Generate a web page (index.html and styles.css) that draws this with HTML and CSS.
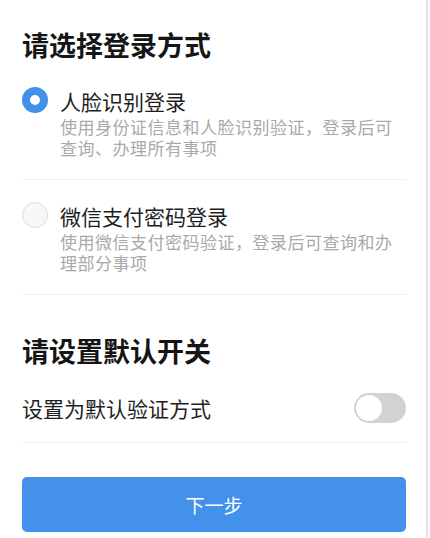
FILE: index.html
```html
<!DOCTYPE html>
<html lang="zh-CN">

<head>
    <meta charset="UTF-8">
    <meta name="viewport" content="width=device-width, initial-scale=1.0">
    <title>登录方式</title>
    <link rel="stylesheet" href="styles.css">
</head>

<body>
    <div class="page">
        <h2 class="title">请选择登录方式</h2>

        <div class="option">
            <span class="radio checked"></span>
            <div class="option-text">
                <p class="option-name">人脸识别登录</p>
                <p class="option-desc">使用身份证信息和人脸识别验证，登录后可查询、办理所有事项</p>
            </div>
        </div>

        <div class="option">
            <span class="radio"></span>
            <div class="option-text">
                <p class="option-name">微信支付密码登录</p>
                <p class="option-desc">使用微信支付密码验证，登录后可查询和办理部分事项</p>
            </div>
        </div>

        <h2 class="title title-second">请设置默认开关</h2>

        <div class="switch-row">
            <span class="switch-label">设置为默认验证方式</span>
            <span class="switch"><span class="knob"></span></span>
        </div>

        <button class="next-btn">下一步</button>
    </div>
</body>

</html>
```

FILE: styles.css
```css
* {
    box-sizing: border-box;
}

body {
    margin: 0;
    background: #fff;
    font-family: "Noto Sans CJK SC", "Noto Sans", sans-serif;
    overflow: hidden;
}

.page {
    width: 428px;
    min-height: 538px;
    padding: 27px 20px 0 22px;
    border-right: 2px solid #e4e4e4;
}

.title {
    margin: 0;
    font-size: 27px;
    line-height: 36px;
    font-weight: 700;
    color: #151515;
}

.title-second {
    margin-top: 38px;
}

.option {
    display: flex;
    align-items: flex-start;
    gap: 12px;
    padding: 24px 0 21px;
    border-bottom: 1px solid #f0f0f0;
}

.option + .option {
    padding-top: 22px;
}

.radio {
    flex: none;
    width: 26px;
    height: 26px;
    margin-top: 0;
    border-radius: 50%;
    border: 1px solid #dcdcdc;
    background: #f7f7f7;
}

.radio.checked {
    border: 8px solid #4191ea;
    background: #fff;
}

.option-text p {
    margin: 0;
}

.option-name {
    font-size: 21px;
    line-height: 28px;
    color: #1e1e1e;
}

.option-desc {
    margin-top: 1px !important;
    font-size: 17px;
    line-height: 21px;
    color: #a9a9a9;
    letter-spacing: 0.5px;
}

.switch-row {
    display: flex;
    justify-content: space-between;
    align-items: center;
    padding: 24px 0 19px;
    border-bottom: 1px solid #f0f0f0;
}

.switch-label {
    font-size: 21px;
    line-height: 28px;
    color: #1e1e1e;
}

.switch {
    display: flex;
    align-items: center;
    width: 52px;
    height: 30px;
    padding: 2px;
    border-radius: 15px;
    background: #d2d2d2;
}

.knob {
    width: 26px;
    height: 26px;
    border-radius: 50%;
    background: #fff;
}

.next-btn {
    display: block;
    width: 100%;
    height: 55px;
    margin-top: 34px;
    border: none;
    border-radius: 5px;
    background: #4391ea;
    color: #fff;
    font-family: inherit;
    font-size: 19px;
}
```
